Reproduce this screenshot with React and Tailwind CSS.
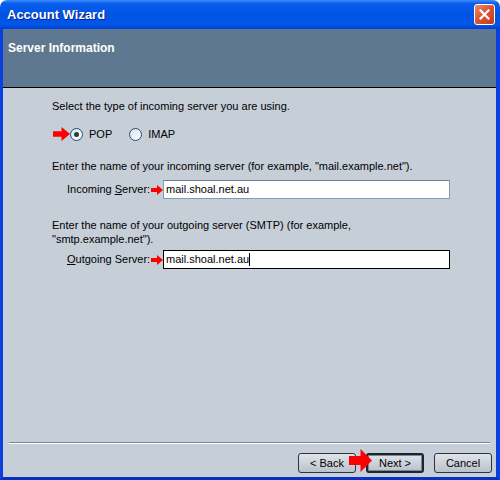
import React from 'react';

function Arrow({ w = 12, h = 10 }) {
  return (
    <svg width={w} height={h} viewBox="0 0 12 10" preserveAspectRatio="none" className="shrink-0">
      <polygon points="0,3 6,3 6,0 12,5 6,10 6,7 0,7" fill="#ff0000" />
    </svg>
  );
}

function Radio({ checked }) {
  return (
    <span className="relative w-[13px] h-[13px] rounded-full border border-[#1c5180] bg-gradient-to-br from-[#dcdfe4] to-white flex items-center justify-center shrink-0">
      {checked && <span className="w-[5px] h-[5px] rounded-full bg-[#2c3e33]" />}
    </span>
  );
}

function Btn({ children, isDefault }) {
  return (
    <div
      className={
        'w-[58px] h-[20px] rounded-[3px] flex items-center justify-center text-[11px] text-black bg-gradient-to-b from-[#dfe4ea] via-[#cdd3db] to-[#b9c1cb] ' +
        (isDefault ? 'border-2 border-[#1d2630] shadow-[inset_0_0_0_1px_#7d8894]' : 'border border-[#2c3440]')
      }
    >
      {children}
    </div>
  );
}

export default function App() {
  return (
    <div className="w-[500px] h-[480px] bg-white flex flex-col font-['Liberation_Sans',Arial,sans-serif] text-[11px] text-black leading-[13px]">
      {/* Title bar */}
      <div className="h-[29px] shrink-0 rounded-t-[7px] bg-[linear-gradient(to_bottom,#3d8eff_0%,#0b5eec_12%,#0054e3_50%,#0256e8_85%,#0140d2_100%)] flex items-center justify-between pl-[7px] pr-[5px]">
        <span className="text-white font-bold text-[13px] [text-shadow:1px_1px_0_#0a1f8a]">Account Wizard</span>
        <div className="w-[21px] h-[21px] rounded-[3px] border border-white bg-gradient-to-br from-[#ea8a6a] via-[#d9532e] to-[#c03a17] flex items-center justify-center">
          <svg width="11" height="11" viewBox="0 0 11 11">
            <path d="M1.5 1.5 L9.5 9.5 M9.5 1.5 L1.5 9.5" stroke="white" strokeWidth="2.2" strokeLinecap="square" />
          </svg>
        </div>
      </div>

      {/* Frame */}
      <div className="flex-1 flex flex-col border-l-[3px] border-r-[4px] border-b-[3px] border-l-[#0b3fe0] border-r-[#0b3fe0] border-b-[#0831c4] bg-[#c6ced8]">
        {/* Header */}
        <div className="h-[59px] shrink-0 bg-[#5e7891] border-b border-black pl-[5px] pt-[13px]">
          <span className="text-white font-bold text-[12px]">Server Information</span>
        </div>

        {/* Content */}
        <div className="flex-1 flex flex-col pl-[49px] pt-[12px]">
          <p>Select the type of incoming server you are using.</p>
          <div className="flex items-center mt-[14px] h-[14px]">
            <span className="ml-[1px]">
              <Arrow w={17} h={14} />
            </span>
            <Radio checked />
            <span className="ml-[6px]">POP</span>
            <span className="ml-[17px]">
              <Radio />
            </span>
            <span className="ml-[6px]">IMAP</span>
          </div>

          <p className="mt-[19px]">Enter the name of your incoming server (for example, "mail.example.net").</p>
          <div className="flex items-center mt-[7px] pl-[15px]">
            <span className="w-[84px] whitespace-nowrap">
              Incoming <span className="underline">S</span>erver:
            </span>
            <Arrow />
            <div className="w-[287px] h-[19px] bg-white border border-[#7f9db9] border-t-[#6d7f93] flex items-center pl-[2px]">
              mail.shoal.net.au
            </div>
          </div>

          <p className="mt-[19px] leading-[14px]">
            Enter the name of your outgoing server (SMTP) (for example,
            <br />
            "smtp.example.net").
          </p>
          <div className="flex items-center mt-[4px] pl-[15px]">
            <span className="w-[84px] whitespace-nowrap">
              <span className="underline">O</span>utgoing Server:
            </span>
            <Arrow />
            <div className="w-[287px] h-[19px] bg-white border border-black flex items-center pl-[2px]">
              mail.shoal.net.au<span className="w-px h-[13px] bg-black" />
            </div>
          </div>

          <div className="flex-1" />
        </div>

        {/* Separator */}
        <div className="mx-[6px] h-[2px] shrink-0 border-t border-[#7a8592] border-b border-b-white" />

        {/* Buttons */}
        <div className="h-[33px] shrink-0 flex items-start justify-end pr-[4px] pt-[9px] relative">
          <Btn>&lt; Back</Btn>
          <div className="ml-[10px]">
            <Btn isDefault>Next &gt;</Btn>
          </div>
          <div className="ml-[10px]">
            <Btn>Cancel</Btn>
          </div>
          <div className="absolute left-[346px] top-[5px]">
            <Arrow w={23} h={23} />
          </div>
        </div>
      </div>
    </div>
  );
}
